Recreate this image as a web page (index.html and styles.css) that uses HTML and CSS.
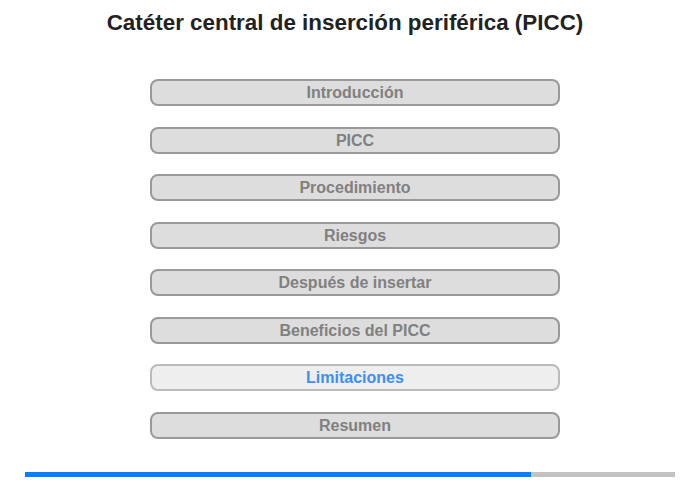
FILE: index.html
```html
<!DOCTYPE html>
<html lang="es">
<head>
  <meta charset="UTF-8">
  <title>PICC</title>
  <link rel="stylesheet" href="styles.css">
</head>
<body>
  <h1 class="titulo">Catéter central de inserción periférica (PICC)</h1>

  <nav class="menu">
    <a class="menu-btn" href="#">Introducción</a>
    <a class="menu-btn" href="#">PICC</a>
    <a class="menu-btn" href="#">Procedimiento</a>
    <a class="menu-btn" href="#">Riesgos</a>
    <a class="menu-btn" href="#">Después de insertar</a>
    <a class="menu-btn" href="#">Beneficios del PICC</a>
    <a class="menu-btn activo" href="#">Limitaciones</a>
    <a class="menu-btn" href="#">Resumen</a>
  </nav>

  <div class="progreso">
    <div class="progreso-barra" style="width: 77.9%;"></div>
  </div>
</body>
</html>
```

FILE: styles.css
```css
body {
  font-family: "Liberation Sans", Arial, sans-serif;
  margin: 0;
  padding: 0;
  background-color: #ffffff;
  width: 700px;
  height: 480px;
}

.titulo {
  margin: 0;
  padding-top: 9px;
  height: 31px;
  font-size: 22.4px;
  line-height: 28px;
  color: #222222;
  text-align: center;
  padding-right: 10px;
}

.menu {
  display: flex;
  flex-direction: column;
  gap: 20.5px;
  width: 410px;
  margin: 39px 0 0 150px;
}

.menu-btn {
  display: block;
  box-sizing: border-box;
  height: 27px;
  line-height: 23px;
  background-color: #dddddd;
  border: 2px solid #999999;
  border-radius: 8px;
  color: #808080;
  font-size: 16px;
  font-weight: bold;
  text-align: center;
  text-decoration: none;
}

.menu-btn.activo {
  background-color: #eeeeee;
  border-color: #bbbbbb;
  color: #3a8ef6;
}

.progreso {
  margin: 33px 0 0 25px;
  width: 650px;
  height: 5px;
  background-color: #c2c2c2;
}

.progreso-barra {
  height: 100%;
  background-color: #0a7ffb;
}
```
